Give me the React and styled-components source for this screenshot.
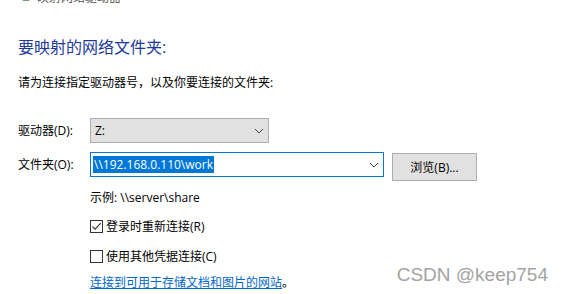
import React from "react";
import styled, { createGlobalStyle } from "styled-components";

const GlobalStyle = createGlobalStyle`
  html, body {
    margin: 0;
    padding: 0;
    background: #ffffff;
  }
  body {
    font-family: "Open Sans", "Noto Sans CJK SC", sans-serif;
    font-size: 12px;
    color: #000000;
  }
`;

const Checkbox = ({ checked, label }) => (
  <CheckRow>
    <Box>
      {checked && (
        <svg width="11" height="11" viewBox="0 0 11 11">
          <path d="M1.5 5.5 L4.2 8.2 L9.6 2.2" fill="none" stroke="#333" strokeWidth="1.1" />
        </svg>
      )}
    </Box>
    <span>{label}</span>
  </CheckRow>
);

const Chevron = () => (
  <svg width="10" height="6" viewBox="0 0 10 6">
    <path d="M1 1 L5 5 L9 1" fill="none" stroke="#444" strokeWidth="1" />
  </svg>
);

const App = () => {
  return (
    <>
      <GlobalStyle />
      <Page>
        <TitleStrip>
          <TitleInner>
            <TitleIcon />
            <span>映射网络驱动器</span>
          </TitleInner>
        </TitleStrip>
        <Content>
          <Heading>要映射的网络文件夹:</Heading>
          <Subtitle>请为连接指定驱动器号，以及你要连接的文件夹:</Subtitle>
          <Form>
            <Label>驱动器(D):</Label>
            <Select>
              <span>Z:</span>
              <Chevron />
            </Select>
            <Label>文件夹(O):</Label>
            <FolderRow>
              <Input>
                <Selected>\\192.168.0.110\work</Selected>
                <Chevron />
              </Input>
              <Button>浏览(B)...</Button>
            </FolderRow>
          </Form>
          <Options>
            <Example>示例: \\server\share</Example>
            <Checkbox checked label="登录时重新连接(R)" />
            <Gap />
            <Checkbox label="使用其他凭据连接(C)" />
            <LinkLine>
              <Link>连接到可用于存储文档和图片的网站</Link>。
            </LinkLine>
          </Options>
        </Content>
        <Watermark>CSDN @keep754</Watermark>
      </Page>
    </>
  );
};

export default App;

const Page = styled.div`
  position: relative;
  width: 564px;
  height: 294px;
  overflow: hidden;
  background: #ffffff;
`;

const TitleStrip = styled.div`
  height: 4px;
  overflow: hidden;
`;

const TitleInner = styled.div`
  display: flex;
  align-items: center;
  gap: 7px;
  margin-top: -10px;
  padding-left: 22px;
  height: 14px;
  font-size: 12px;
  color: #555;
`;

const TitleIcon = styled.div`
  width: 8px;
  height: 8px;
  border-radius: 2px;
  background: #6a9f7a;
`;

const Content = styled.div`
  padding-left: 18px;
`;

const Heading = styled.div`
  margin-top: 32px;
  font-size: 16px;
  line-height: 22px;
  color: #1c3a9a;
`;

const Subtitle = styled.div`
  margin-top: 17px;
  line-height: 16px;
`;

const Form = styled.div`
  display: grid;
  grid-template-columns: 72px auto;
  row-gap: 9px;
  align-items: start;
  margin-top: 27px;
`;

const Label = styled.div`
  line-height: 25px;
`;

const Select = styled.div`
  box-sizing: border-box;
  width: 179px;
  height: 25px;
  display: flex;
  align-items: center;
  justify-content: space-between;
  padding: 0 4px 0 4px;
  background: #e1e1e1;
  border: 1px solid #adadad;
`;

const FolderRow = styled.div`
  display: flex;
  align-items: flex-start;
  gap: 8px;
`;

const Input = styled.div`
  box-sizing: border-box;
  width: 294px;
  height: 25px;
  display: flex;
  align-items: center;
  justify-content: space-between;
  padding: 0 4px 0 2px;
  background: #ffffff;
  border: 1px solid #0078d7;
`;

const Selected = styled.span`
  background: #0078d7;
  color: #ffffff;
  line-height: 17px;
  padding: 0 1px;
`;

const Button = styled.div`
  box-sizing: border-box;
  width: 85px;
  height: 28px;
  margin-top: 1px;
  display: flex;
  align-items: center;
  justify-content: center;
  background: #e1e1e1;
  border: 1px solid #adadad;
`;

const Options = styled.div`
  padding-left: 72px;
  margin-top: 9px;
`;

const Example = styled.div`
  line-height: 16px;
  margin-bottom: 12px;
`;

const CheckRow = styled.div`
  display: flex;
  align-items: center;
  gap: 3px;
  height: 16px;
`;

const Box = styled.div`
  box-sizing: border-box;
  width: 13px;
  height: 13px;
  border: 1px solid #333;
  background: #fff;
  display: flex;
  align-items: center;
  justify-content: center;
`;

const Gap = styled.div`
  height: 14px;
`;

const LinkLine = styled.div`
  margin-top: 11px;
  line-height: 16px;
`;

const Link = styled.span`
  color: #0066cc;
  text-decoration: underline;
`;

const Watermark = styled.div`
  position: absolute;
  right: 16px;
  bottom: 8px;
  font-family: "Liberation Sans", Arial, sans-serif;
  font-size: 19px;
  color: #a3a3a3;
  text-shadow: 0 0 1px #ffffff;
`;
